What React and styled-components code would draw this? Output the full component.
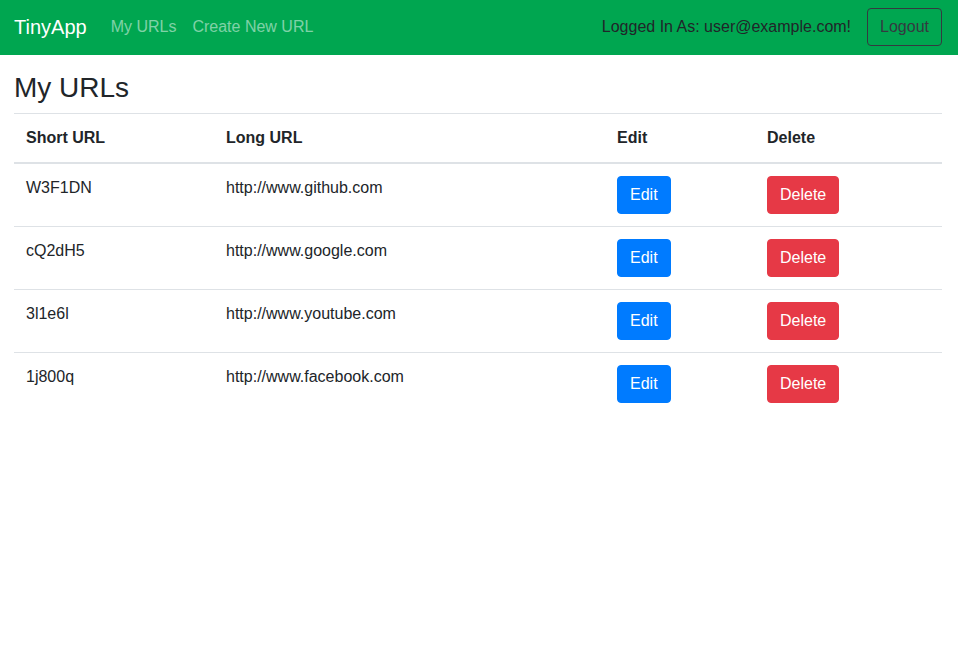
import styled, { createGlobalStyle } from "styled-components";

const urls = [
    { id: "W3F1DN", long: "http://www.github.com" },
    { id: "cQ2dH5", long: "http://www.google.com" },
    { id: "3l1e6l", long: "http://www.youtube.com" },
    { id: "1j800q", long: "http://www.facebook.com" },
];

export default function App() {
    return (
        <>
            <GlobalStyle />
            <Navbar>
                <Brand>TinyApp</Brand>
                <NavLinks>
                    <NavLink>My URLs</NavLink>
                    <NavLink>Create New URL</NavLink>
                </NavLinks>
                <NavRight>
                    <LoggedIn>Logged In As: user@example.com!</LoggedIn>
                    <OutlineButton>Logout</OutlineButton>
                </NavRight>
            </Navbar>
            <Main>
                <Title>My URLs</Title>
                <Table>
                    <colgroup>
                        <col style={{ width: 200 }} />
                        <col style={{ width: 391 }} />
                        <col style={{ width: 150 }} />
                        <col />
                    </colgroup>
                    <thead>
                        <tr>
                            <Th>Short URL</Th>
                            <Th>Long URL</Th>
                            <Th>Edit</Th>
                            <Th>Delete</Th>
                        </tr>
                    </thead>
                    <tbody>
                        {urls.map(u => (
                            <tr key={u.id}>
                                <Td>{u.id}</Td>
                                <Td>{u.long}</Td>
                                <Td><Button variant="primary">Edit</Button></Td>
                                <Td><Button variant="danger">Delete</Button></Td>
                            </tr>
                        ))}
                    </tbody>
                </Table>
            </Main>
        </>
    );
}

const GlobalStyle = createGlobalStyle`
    body {
        margin: 0;
        font-family: "Liberation Sans", Arial, sans-serif;
        font-size: 16px;
        line-height: 1.5;
        color: #212529;
        background: #fff;
    }
`

const Navbar = styled.nav`
    display: flex;
    align-items: center;
    height: 55px;
    padding: 0 16px 1px 14px;
    box-sizing: border-box;
    background-color: #00a650;
`

const Brand = styled.a`
    font-size: 20px;
    line-height: 30px;
    color: #fff;
    margin-right: 16px;
`

const NavLinks = styled.div`
    display: flex;
`

const NavLink = styled.a`
    padding: 8px;
    color: rgba(255, 255, 255, 0.5);
`

const NavRight = styled.div`
    margin-left: auto;
    display: flex;
    align-items: center;
    gap: 16px;
`

const LoggedIn = styled.span`
    color: #212529;
`

const OutlineButton = styled.button`
    font-family: inherit;
    font-size: 16px;
    line-height: 24px;
    padding: 6px 12px;
    color: #343a40;
    background: transparent;
    border: 1px solid #343a40;
    border-radius: 4px;
`

const Main = styled.main`
    padding: 16px 16px 0 14px;
`

const Title = styled.h3`
    margin: 0 0 8px;
    font-size: 28px;
    font-weight: 500;
    line-height: 1.2;
`

const Table = styled.table`
    width: 100%;
    border-collapse: collapse;
    table-layout: fixed;

    thead th {
        border-bottom: 2px solid #dee2e6;
    }
`

const Th = styled.th`
    text-align: left;
    padding: 12px;
    border-top: 1px solid #dee2e6;
    font-weight: 700;
    vertical-align: bottom;
`

const Td = styled.td`
    padding: 12px;
    border-top: 1px solid #dee2e6;
    vertical-align: top;
`

const Button = styled.button`
    font-family: inherit;
    font-size: 16px;
    line-height: 24px;
    padding: 6px 12px;
    color: #fff;
    border: 1px solid ${props => props.variant === "danger" ? "#e63946" : "#007bff"};
    background-color: ${props => props.variant === "danger" ? "#e63946" : "#007bff"};
    border-radius: 4px;
`
